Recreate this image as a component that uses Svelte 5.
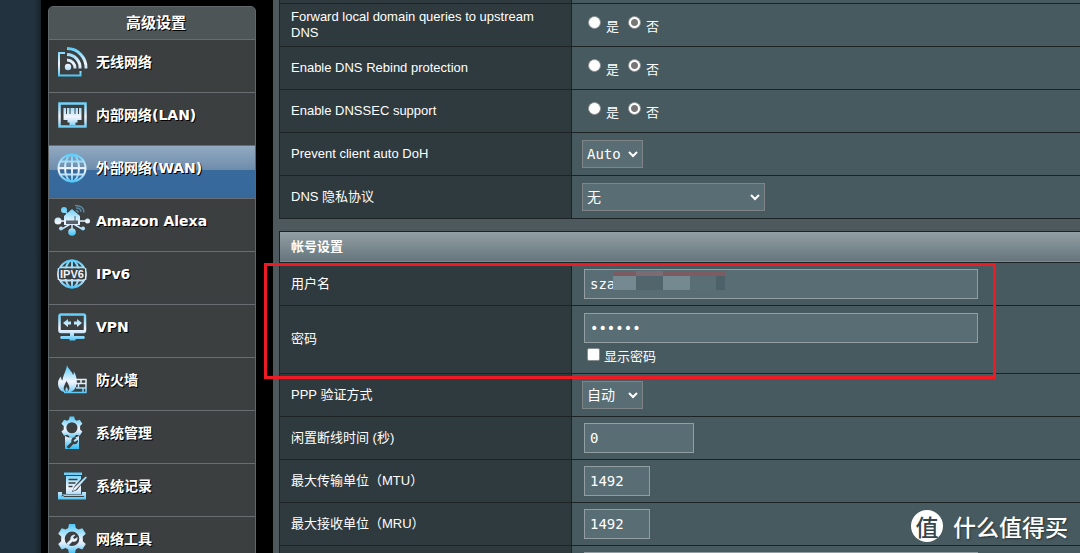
<script lang="ts">
    type MenuItem = { icon: string; label: string };

    const menu: MenuItem[] = [
        { icon: 'wifi', label: '无线网络' },
        { icon: 'lan', label: '内部网络(LAN)' },
        { icon: 'wan', label: '外部网络(WAN)' },
        { icon: 'alexa', label: 'Amazon Alexa' },
        { icon: 'ipv6', label: 'IPv6' },
        { icon: 'vpn', label: 'VPN' },
        { icon: 'firewall', label: '防火墙' },
        { icon: 'admin', label: '系统管理' },
        { icon: 'log', label: '系统记录' },
        { icon: 'tools', label: '网络工具' },
    ];

    const switches = [
        { id: 'dns_fwd_local', label: 'Forward local domain queries to upstream DNS' },
        { id: 'dns_norebind', label: 'Enable DNS Rebind protection' },
        { id: 'dnssec', label: 'Enable DNSSEC support' },
    ];

    let active = $state('wan');
    let values: Record<string, string> = $state({ dns_fwd_local: '0', dns_norebind: '0', dnssec: '0' });
    let username = $state('sza');
    let password = $state('123456');
    let showPassword = $state(false);
    let idle = $state('0');
    let mtu = $state('1492');
    let mru = $state('1492');

    function select(event: MouseEvent, icon: string) {
        event.preventDefault();
        active = icon;
    }
</script>

{#snippet globe()}
    <circle cx="15" cy="15" r="13.500" />
    <ellipse cx="15" cy="15" rx="7" ry="13.500" />
    <path d="M15 2v26M2 15h26M4 8.500h22M4 21.500h22" />
{/snippet}

{#snippet gear()}
    <path fill-rule="evenodd" d="M12 0h6l.8 4 2.600 1.500 3.900-1.300 3.500 5.500-3 2.700v4.800l3 2.700-3.500 5.500-3.900-1.300-2.600 1.500-.8 4h-6l-.8-4-2.600-1.500-3.900 1.300-3.500-5.500 3-2.700v-4.800l-3-2.700 3.500-5.500 3.900 1.300 2.600-1.500zM15 7.500a7.300 7.300 0 1 0 0 14.600a7.300 7.300 0 1 0 0-14.600z" />
{/snippet}

{#snippet chevron()}
    <svg class="chevron" viewBox="0 0 10 7" aria-hidden="true"><path d="M1 1l4 4 4-4" /></svg>
{/snippet}

{#snippet icon(name: string)}
    <svg class="icon" viewBox="0 0 30 30" aria-hidden="true">
        {#if name === 'wifi'}
            <path class="line" d="M8 6H2v22.500h21.500V24" stroke-width="2" />
            <path class="line" d="M10 1.500a19 19 0 0 1 19 20M10 7.500a13 13 0 0 1 13 14M10 13a8 8 0 0 1 8 8.500" stroke-width="3" />
            <circle class="solid" cx="11" cy="20" r="3.200" />
        {:else if name === 'lan'}
            <rect class="line" x="2.500" y="3.500" width="26" height="23" stroke-width="2.500" />
            <path class="solid" d="M6.500 8H9v6h1V8h2.500v6h1V8h4v6h1V8H21v6h1V8h2.500v12h-4v2.500h-2V25h-6v-2.500h-2V20h-4z" />
        {:else if name === 'wan'}
            <g class="line" stroke-width="2">{@render globe()}</g>
        {:else if name === 'alexa'}
            <path class="line" d="M15 15h14M15 15H1M15 15v10M15 17L5 23M15 17l10 6M15 13L7 4" stroke-width="1.500" />
            <path class="solid" d="M7 10l8-7 8 7v9H7z" />
            <path d="M9 14.500h12v3.500H9z" fill="#56616b" />
            <path d="M18 10v5" stroke="#56616b" />
            <g class="solid">
                <circle cx="1" cy="15" r="3.500" />
                <circle cx="7" cy="4" r="3" />
                <circle cx="30.500" cy="15" r="2.500" />
                <circle cx="15" cy="26" r="3.800" />
                <circle cx="4" cy="22.500" r="2" />
                <circle cx="26" cy="22.500" r="2" />
            </g>
            <path d="M18-.5q9 0 9 7M19 2q5 0 5 4M19 4.500q2 0 2 2" fill="none" stroke="#5c87a0" stroke-width="1.500" />
        {:else if name === 'ipv6'}
            <g class="line" stroke-width="2">{@render globe()}</g>
            <path d="M1 9.500h28v10.500H1z" fill="#3b3f40" />
            <path class="line" d="M1.500 9q-1 6 0 12M28.500 9q1 6 0 12" stroke-width="1.500" />
            <text class="mark" x="15" y="19" text-anchor="middle">IPV6</text>
        {:else if name === 'vpn'}
            <rect class="line" x="2.500" y="2.500" width="25.500" height="17.500" rx="1.500" stroke-width="2.500" />
            <path class="solid" d="M6 11l5-4v2.500h3v3h-3V15zM25 11l-5-4v2.500h-3v3h3V15zM3 18h25v3H3zM13 21h4v3h10l1 1.500-1 1.500h-8l-1 1.500h-5L12 27H4l-1-1.500L4 24h9z" />
        {:else if name === 'firewall'}
            <path class="line" d="M19 14.500h10v13H7M19 18.500h10M19 23h10M24 14.500v4M21.500 19v4M26 23v4.500" stroke-width="1.500" />
            <path class="solid" d="M10 0c1 4 5 6 6 10 .8-1 1-2 .8-3.500 2.500 4 4.200 10 2.200 15-1.500 4-5 6-9 6-6 0-9-4-9-9 0-3 1-5 3-7 0 2 .5 3 1.500 4C6 10 9 7 10 0z" />
            <path d="M9 27c-4-3-2-6 .5-11 3 5 4.500 8 .5 11z" fill="#3b3f40" />
            <path class="solid" d="M9.300 27c-1.500-2-1-3 .3-5 1.500 2 1.800 3.500.4 5z" />
        {:else if name === 'admin'}
            <g transform="translate(3.500 -1.500) scale(.76)" class="solid">{@render gear()}</g>
            <path class="solid" d="M8 18q7 4 14 0v13H8z" />
            <path d="M9.500 29l5-5c-1-3 2-6 5-4l-3 2.500 1 1.500 3.500-2c.5 3-2 5-4.500 4l-4.500 4.500z" fill="#3b3f40" />
        {:else if name === 'log'}
            <path class="solid" d="M7 1.500h18v2.500H7zM9 5h15v3l-7 8-2 5 5-2 4-5v9H9z" />
            <path d="M11.500 8.500h9M11.500 12h7M11.500 15.500h4" stroke="#3b3f40" stroke-width="1.300" />
            <path class="solid" d="M28.500 5.500l1.500 1L18.500 19l-2.500 1 .5-2.500z" />
            <path class="solid" d="M1 21h4v2.500h20V21h4v7.500H1z" />
            <path d="M4.500 25q2-1.500 2.500.5h20" fill="none" stroke="#3b3f40" stroke-width="1" />
        {:else}
            <g class="solid">{@render gear()}</g>
            <path class="solid" d="M9.500 19.500l4-4c-.5-3 2-5.500 5-4.500l-2.500 2.500 1.500 1.500 3-2c.5 3.500-2 5.500-5 4.500l-4 4z" />
        {/if}
    </svg>
{/snippet}

<svg class="defs" aria-hidden="true">
    <defs>
        <linearGradient id="shine" gradientUnits="userSpaceOnUse" x1="0" y1="0" x2="0" y2="30">
            <stop offset="0" stop-color="#4fc8f8" />
            <stop offset=".55" stop-color="#f2f5fd" />
            <stop offset=".7" stop-color="#c9e6fa" />
            <stop offset="1" stop-color="#36c0f7" />
        </linearGradient>
    </defs>
</svg>

<div class="page">
    <div class="sidebar">
        <nav class="menu">
            <h2>高级设置</h2>
            {#each menu as item}
                <a href="#{item.icon}" class:active={active === item.icon} onclick={(e) => select(e, item.icon)}>
                    {@render icon(item.icon)}
                    <span>{item.label}</span>
                </a>
            {/each}
        </nav>
    </div>

    <main>
        <table class="dns">
            <colgroup><col class="name" /><col /></colgroup>
            <tbody>
                <tr class="gap"><th></th><td></td></tr>
                {#each switches as row}
                    <tr>
                        <th scope="row">{row.label}</th>
                        <td>
                            <div class="radios">
                                <label><input type="radio" name={row.id} value="1" bind:group={values[row.id]} /><span>是</span></label>
                                <label><input type="radio" name={row.id} value="0" bind:group={values[row.id]} /><span>否</span></label>
                            </div>
                        </td>
                    </tr>
                {/each}
                <tr>
                    <th scope="row"><label for="doh">Prevent client auto DoH</label></th>
                    <td>
                        <div class="dropdown short">
                            <select id="doh">
                                <option>Auto</option>
                                <option>Yes</option>
                                <option>No</option>
                            </select>
                            {@render chevron()}
                        </div>
                    </td>
                </tr>
                <tr>
                    <th scope="row"><label for="dnspriv">DNS 隐私协议</label></th>
                    <td>
                        <div class="dropdown long">
                            <select id="dnspriv">
                                <option>无</option>
                                <option>DNS-over-TLS (DoT)</option>
                            </select>
                            {@render chevron()}
                        </div>
                    </td>
                </tr>
            </tbody>
        </table>

        <div class="account">
            <table>
                <colgroup><col class="name" /><col /></colgroup>
                <thead>
                    <tr><th colspan="2">帐号设置</th></tr>
                </thead>
                <tbody>
                    <tr>
                        <th scope="row"><label for="user">用户名</label></th>
                        <td>
                            <div class="field">
                                <input id="user" class="wide" type="text" bind:value={username} />
                                <div class="mosaic"><i></i><i></i><i></i><i></i><i></i></div>
                            </div>
                        </td>
                    </tr>
                    <tr class="tall">
                        <th scope="row"><label for="pass">密码</label></th>
                        <td>
                            <div class="field">
                                <input id="pass" class="wide" type={showPassword ? 'text' : 'password'} bind:value={password} />
                            </div>
                            <label class="show"><input type="checkbox" bind:checked={showPassword} /><span>显示密码</span></label>
                        </td>
                    </tr>
                    <tr>
                        <th scope="row"><label for="auth">PPP 验证方式</label></th>
                        <td>
                            <div class="dropdown short">
                                <select id="auth">
                                    <option>自动</option>
                                    <option>PAP</option>
                                    <option>CHAP</option>
                                </select>
                                {@render chevron()}
                            </div>
                        </td>
                    </tr>
                    <tr>
                        <th scope="row"><label for="idle">闲置断线时间 (秒)</label></th>
                        <td><div class="field"><input id="idle" class="medium" type="text" bind:value={idle} /></div></td>
                    </tr>
                    <tr>
                        <th scope="row"><label for="mtu">最大传输单位（MTU）</label></th>
                        <td><div class="field"><input id="mtu" class="narrow" type="text" bind:value={mtu} /></div></td>
                    </tr>
                    <tr>
                        <th scope="row"><label for="mru">最大接收单位（MRU）</label></th>
                        <td><div class="field"><input id="mru" class="narrow" type="text" bind:value={mru} /></div></td>
                    </tr>
                    <tr>
                        <th></th>
                        <td><div class="field"><input class="wide" type="text" aria-label="Service name" /></div></td>
                    </tr>
                </tbody>
            </table>
            <div class="highlight"></div>
        </div>
    </main>

    <div class="watermark"><b>值</b><span>什么值得买</span></div>
</div>

<style>
    :global(body) {
        background: #22333f;
        font-family: "Liberation Sans", Arial, "Noto Sans CJK SC", sans-serif;
    }

    .defs {
        position: absolute;
        width: 0;
        height: 0;
    }

    .page {
        position: relative;
        display: flex;
        box-sizing: border-box;
        height: 100vh;
        overflow: hidden;
        padding-left: 41px;
        background: linear-gradient(to right, #22333f 34px, #182229 41px, #000 41px);
        color: #fff;
    }

    .sidebar {
        flex: none;
        width: 208px;
        padding: 6px 17px 0 7px;
    }

    .menu {
        box-sizing: border-box;
        border: 1px solid #60676a;
        border-radius: 5px 5px 0 0;
        overflow: hidden;
        background: #3b3f40;
        font-family: "DejaVu Sans", Verdana, "Noto Sans CJK SC", sans-serif;
        font-weight: bold;
        text-shadow: 1px 1px 0 #000;
    }

    .menu h2 {
        margin: 0;
        padding-left: 8px;
        background: #4d5557;
        font-size: 15px;
        line-height: 32px;
        text-align: center;
    }

    .menu a {
        display: flex;
        align-items: center;
        gap: 9px;
        box-sizing: border-box;
        height: 53px;
        padding: 0 8px 9px;
        border-top: 1px solid #676d70;
        color: #fff;
        font-size: 14px;
        line-height: 20px;
        text-decoration: none;
    }

    .menu a.active {
        background: linear-gradient(#92aac2, #6d8cab 47%, #396a9c 47%, #37689c);
    }

    .icon {
        flex: none;
        width: 30px;
        height: 30px;
        overflow: visible;
    }

    .line {
        fill: none;
        stroke: url(#shine);
    }

    .solid {
        fill: url(#shine);
    }

    .mark {
        fill: #eef4fc;
        font: bold 11px "Liberation Sans", Arial, sans-serif;
        text-shadow: none;
    }

    main {
        flex: 1;
        min-width: 0;
        padding-left: 6px;
        background: #4d595d;
    }

    table {
        width: 100%;
        border-collapse: collapse;
        table-layout: fixed;
        font-size: 13px;
        line-height: 16px;
    }

    .name {
        width: 292px;
    }

    .dns {
        margin-bottom: 12px;
    }

    th,
    td {
        box-sizing: border-box;
        height: 43px;
        padding: 0 11px;
        border: 1px solid #1d2325;
        border-right: 0;
        text-align: left;
        font-weight: normal;
    }

    th {
        background: #2f3a3e;
    }

    td {
        padding: 0 10px;
        background: #475a5f;
    }

    thead th {
        height: 31px;
        background: linear-gradient(#92a0a5, #66757c);
        font-weight: bold;
    }

    .gap th,
    .gap td {
        height: 3px;
        border-top: 0;
    }

    .tall th,
    .tall td {
        height: 68px;
    }

    select,
    .field input {
        box-sizing: border-box;
        border: 1px solid #929ea1;
        border-radius: 0;
        background: #596d74;
        color: #fff;
        font-family: "DejaVu Sans Mono", "Noto Sans CJK SC", monospace;
        font-size: 14px;
    }

    select {
        display: block;
        appearance: none;
        width: 100%;
        height: 28px;
        padding: 0 4px;
        border-color: #7f8586;
    }

    .dropdown {
        position: relative;
    }

    .chevron {
        position: absolute;
        top: 11px;
        right: 5px;
        width: 10px;
        height: 7px;
        fill: none;
        stroke: #fff;
        stroke-width: 2;
        pointer-events: none;
    }

    .short {
        width: 61px;
    }

    .long {
        width: 183px;
    }

    .field {
        position: relative;
        margin-left: 2px;
    }

    .field input {
        display: block;
        height: 30px;
        padding: 0 5px;
    }

    .field .wide {
        width: 394px;
        max-width: 100%;
    }

    .medium {
        width: 110px;
    }

    .narrow {
        width: 66px;
    }

    .mosaic {
        position: absolute;
        top: 2px;
        left: 29px;
        display: grid;
        grid-template-columns: 23px 27px 27px 26px 9px;
        height: 19px;
    }

    .mosaic i {
        border-top: 5px solid #7c5c63;
        background: #758a90;
    }

    .mosaic i:nth-child(2) {
        border-color: #7b6c73;
        background: #51666c;
    }

    .mosaic i:nth-child(4) {
        background: #5a6e75;
    }

    .mosaic i:nth-child(5) {
        background: #4d6168;
    }

    .radios {
        display: flex;
        gap: 9px;
        padding-left: 6px;
    }

    .radios label,
    .show {
        display: flex;
        gap: 5px;
    }

    .radios span,
    .show span {
        padding-top: 4px;
    }

    input[type="radio"],
    input[type="checkbox"] {
        appearance: none;
        flex: none;
        box-sizing: border-box;
        width: 13px;
        height: 13px;
        margin: 1px 0 0;
        border: 1px solid #8a8f90;
        border-radius: 50%;
        background: #fff;
    }

    input[type="radio"]:checked {
        background: radial-gradient(circle, #767676 3px, #fff 4px);
    }

    .show {
        gap: 4px;
        padding-left: 5px;
    }

    .show input[type="checkbox"] {
        margin-top: 5px;
        border-radius: 2px;
    }

    .show span {
        padding-top: 6px;
    }

    input[type="checkbox"]:checked {
        background: #767676;
    }

    .account {
        position: relative;
    }

    .highlight {
        position: absolute;
        top: 32px;
        left: -15px;
        box-sizing: border-box;
        width: 732px;
        height: 116px;
        border: 3px solid #ed1c24;
        pointer-events: none;
    }

    .watermark {
        position: absolute;
        right: 12px;
        bottom: 11px;
        display: flex;
        align-items: center;
        gap: 10px;
        font-family: "Noto Sans CJK SC", sans-serif;
        font-size: 23px;
        font-weight: 500;
        line-height: 32px;
        text-shadow: 1px 1px 2px #28353a;
    }

    .watermark b {
        width: 32px;
        height: 32px;
        border-radius: 50%;
        background: #fff;
        color: #34454b;
        font-weight: 500;
        text-align: center;
        text-shadow: none;
    }
</style>
